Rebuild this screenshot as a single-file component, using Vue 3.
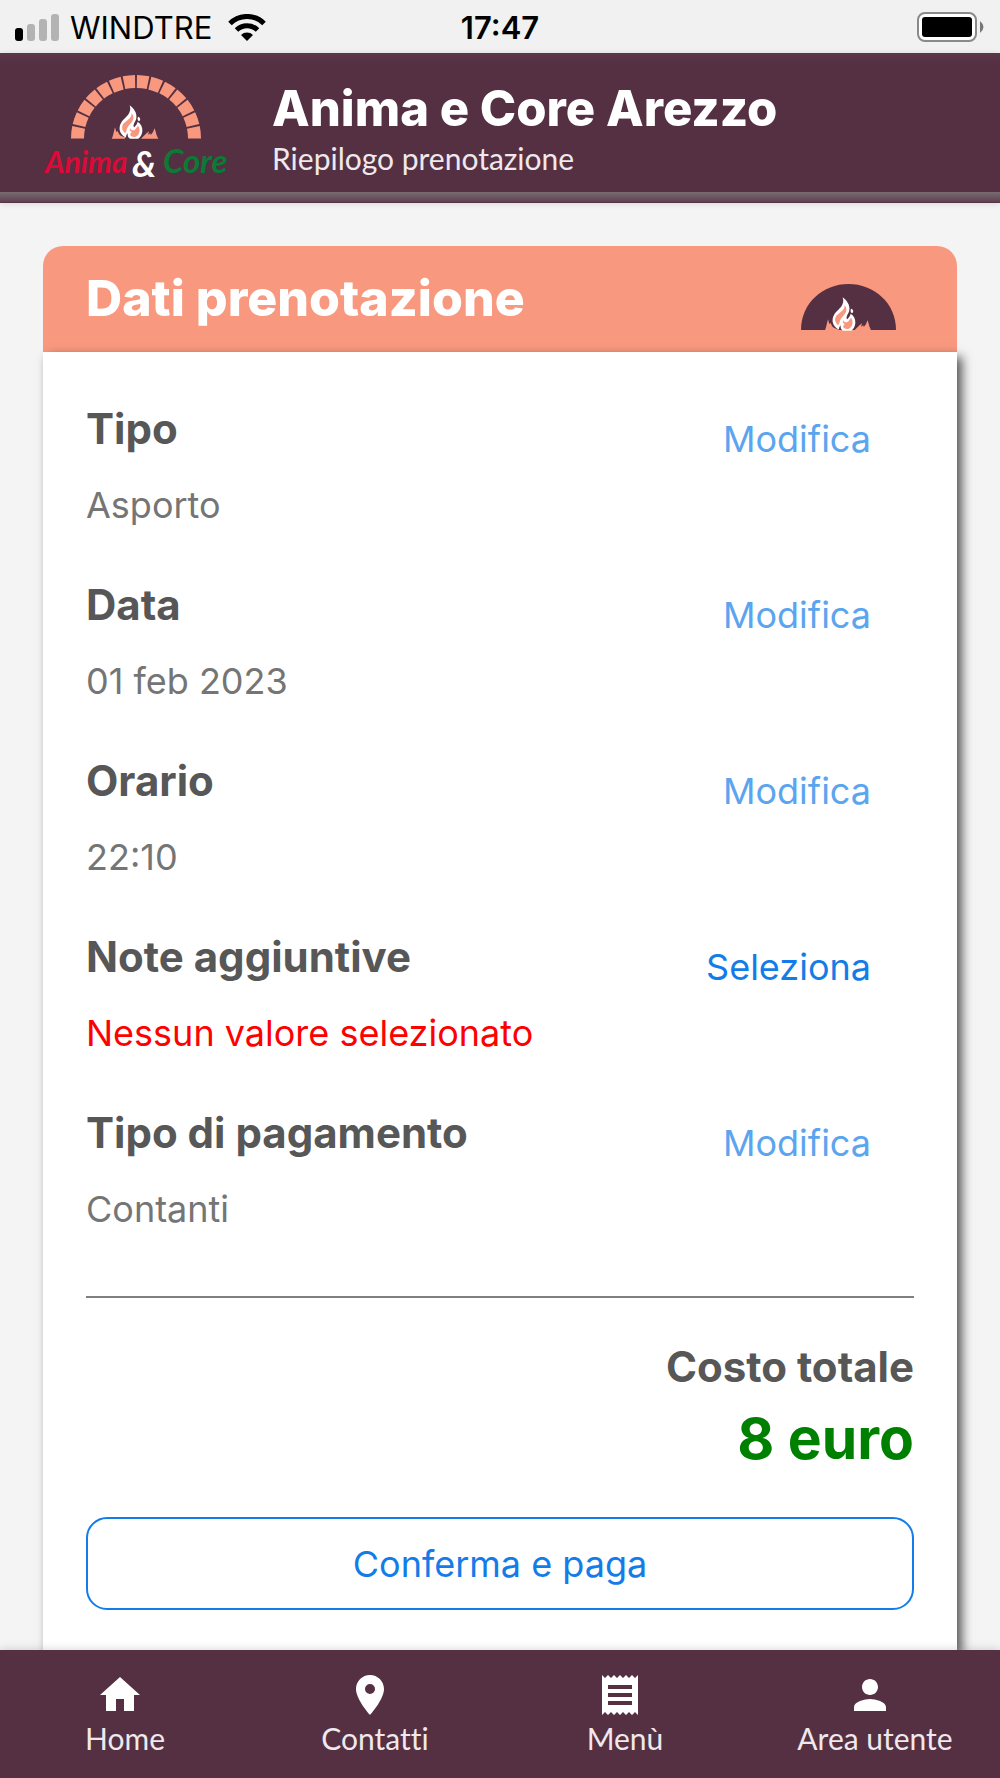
<script setup>
const rows = [
  { label: 'Tipo', value: 'Asporto', action: 'Modifica' },
  { label: 'Data', value: '01 feb 2023', action: 'Modifica' },
  { label: 'Orario', value: '22:10', action: 'Modifica' },
  { label: 'Note aggiuntive', value: 'Nessun valore selezionato', action: 'Seleziona', missing: true },
  { label: 'Tipo di pagamento', value: 'Contanti', action: 'Modifica' },
]

const tabs = [
  { label: 'Home', icon: 'M10 20v-6h4v6h5v-8h3L12 3 2 12h3v8z' },
  { label: 'Contatti', icon: 'M12 2C8.13 2 5 5.13 5 9c0 5.25 7 13 7 13s7-7.75 7-13c0-3.87-3.13-7-7-7zm0 9.5a2.5 2.5 0 0 1 0-5 2.5 2.5 0 0 1 0 5z' },
  { label: 'Menù', icon: 'M18 17H6v-2h12v2zm0-4H6v-2h12v2zm0-4H6V7h12v2zM3 22l1.5-1.5L6 22l1.5-1.5L9 22l1.5-1.5L12 22l1.5-1.5L15 22l1.5-1.5L18 22l1.5-1.5L21 22V2l-1.5 1.5L18 2l-1.5 1.5L15 2l-1.5 1.5L12 2l-1.5 1.5L9 2 7.5 3.5 6 2 4.5 3.5 3 2v20z' },
  { label: 'Area utente', icon: 'M12 12c2.21 0 4-1.79 4-4s-1.79-4-4-4-4 1.79-4 4 1.79 4 4 4zm0 2c-2.67 0-8 1.34-8 4v2h16v-2c0-2.66-5.33-4-8-4z' },
]
</script>

<template>
  <div class="app">
    <svg class="defs" aria-hidden="true">
      <symbol id="flame" viewBox="245 136 144 102">
        <path fill="#f8987f" d="M247 237c4-6 5-15 7-22l3-12 4 14 4-3 4 9c4 5 10 8 18 10v4zM335 237c8-6 14-16 24-22l-3 10 7-4 1 5c6-5 9-11 11-20 5 8 4 14 7 20 2 5 4 9 5 11z" />
        <path fill="#fff" d="M301 137c12 9 23 23 20 39-1 7-6 12-8 19-1 4 0 6 2 8 4-5 9-11 10-17 10 6 15 17 14 29-1 10-5 17-12 22h-25c-6-3-8-9-7-16-4 4-5 8-5 13-13-7-21-18-19-32 2-16 15-25 25-36 6-8 9-17 5-29z" />
        <path fill="#f8987f" d="M307 161c7 8 7 17 1 25-6 9-15 15-16 26-1 2-3 6-4 9-8-6-12-16-8-25 5-11 27-16 27-35zM302 205c3 7 12 10 17 3 3-4 5-7 7-10 7 9 6 22-2 30-6 6-17 5-21-1-2-4 3-7 4-11-4 0-7-4-5-11z" />
        <path fill="#fff" d="M326 171c7 2 9 9 3 14-5-3-5-8-3-14z" />
      </symbol>
    </svg>

    <div class="status">
      <div class="carrier">
        <svg width="45" height="27" viewBox="0 0 45 27" aria-hidden="true">
          <rect x="0" y="14" width="8" height="13" rx="3" />
          <g fill="#b3b3b3">
            <rect x="12" y="10" width="8" height="17" rx="3" />
            <rect x="24" y="5" width="8" height="22" rx="3" />
            <rect x="36" y="0" width="8" height="27" rx="3" />
          </g>
        </svg>
        <span>WINDTRE</span>
        <svg width="38" height="27" viewBox="0 0 38 27" fill="none" stroke="#000" stroke-width="5" aria-hidden="true">
          <path d="M2 9.5a24 24 0 0 1 34 0M8.5 16a15 15 0 0 1 21 0" />
          <path d="M13 21a8.5 8.5 0 0 1 12 0l-6 6z" fill="#000" stroke="none" />
        </svg>
      </div>
      <time>17:47</time>
      <div class="battery">
        <svg width="68" height="32" viewBox="0 0 68 32" aria-hidden="true">
          <rect x="1" y="2" width="58" height="28" rx="7" fill="#fff" stroke="#8a8a8a" stroke-width="2" />
          <rect x="5" y="6" width="50" height="20" rx="3" />
          <path d="M63 10q7 6 0 12z" fill="#777" />
        </svg>
      </div>
    </div>

    <header class="top">
      <svg class="logo" width="190" height="112" viewBox="0 0 190 112" role="img" aria-label="Anima &amp; Core">
        <path d="M35.5 64.5a58.5 57 0 0 1 117 0" fill="none" stroke="#f8987f" stroke-width="13" pathLength="194" stroke-dasharray="12 2" />
        <use href="#flame" x="69" y="31" width="48" height="34" />
        <g class="wordmark">
          <text x="3" y="99" fill="#dc0a37">Anima</text>
          <text class="amp" x="90" y="103" fill="#fff">&amp;</text>
          <text class="core" x="121" y="99" fill="#0b7a35">Core</text>
        </g>
      </svg>
      <div class="heading">
        <h1>Anima e Core Arezzo</h1>
        <p>Riepilogo prenotazione</p>
      </div>
    </header>

    <main>
      <section class="card">
        <div class="card-head">
          <h2>Dati prenotazione</h2>
          <svg width="96" height="48" viewBox="0 0 96 48" aria-hidden="true">
            <path d="M0 47C0 20 22 1 47.5 1S95 20 95 47z" fill="#543042" />
            <use href="#flame" x="23" y="14" width="48" height="34" />
          </svg>
        </div>
        <div class="card-body">
          <div v-for="row in rows" :key="row.label" class="row">
            <div>
              <h3>{{ row.label }}</h3>
              <p :class="{ missing: row.missing }">{{ row.value }}</p>
            </div>
            <button type="button" class="action" :class="{ strong: row.missing }">{{ row.action }}</button>
          </div>
          <hr />
          <div class="total">
            <h3>Costo totale</h3>
            <strong>8 euro</strong>
          </div>
          <button type="button" class="confirm">Conferma e paga</button>
        </div>
      </section>
    </main>

    <nav>
      <a v-for="tab in tabs" :key="tab.label" href="#">
        <svg width="48" height="48" viewBox="0 0 24 24" fill="#fff" aria-hidden="true"><path :d="tab.icon" /></svg>
        <span>{{ tab.label }}</span>
      </a>
    </nav>
  </div>
</template>

<style>
body {
  margin: 0;
  background: #f4f4f4;
}
</style>

<style scoped>
* {
  box-sizing: border-box;
}
.app {
  display: flex;
  flex-direction: column;
  min-height: 100vh;
  font-family: Inter, "Liberation Sans", sans-serif;
  color: #575757;
}
h1, h2, h3, p {
  margin: 0;
}
button {
  font: inherit;
  background: none;
  cursor: pointer;
}
.defs {
  position: absolute;
  width: 0;
  height: 0;
}
.status {
  display: grid;
  grid-template-columns: 1fr auto 1fr;
  align-items: center;
  height: 53px;
  padding: 1px 15px 0;
  background: #f1f1f1;
  color: #000;
  font-size: 31px;
}
.carrier {
  display: flex;
  align-items: center;
  gap: 10px;
}
.carrier span {
  margin-right: 6px;
}
.status time {
  font-weight: 600;
}
.battery {
  display: flex;
  justify-content: flex-end;
}
.top {
  display: flex;
  gap: 40px;
  height: 150px;
  padding: 21px 42px 0;
  background: linear-gradient(#5b3749, #543042 11px, #543042 139px, #796b72 139px, #604653 148px, #543042);
  box-shadow: 0 1px 6px rgba(0, 0, 0, 0.12);
  color: #fff;
}
.wordmark {
  font: italic bold 30px Lato, sans-serif;
}
.wordmark .amp {
  font-size: 36px;
}
.wordmark .core {
  font-size: 33px;
}
.heading {
  padding-top: 5px;
}
h1 {
  font-size: 49px;
  font-weight: 800;
  line-height: 60px;
}
.heading p {
  font: 30px/38px Lato, sans-serif;
  color: #efe8ec;
}
main {
  display: flex;
  flex: 1;
  padding: 43px 43px 0;
}
.card {
  display: flex;
  flex: 1;
  flex-direction: column;
}
.card-head {
  display: flex;
  justify-content: space-between;
  height: 106px;
  padding: 22px 60px 0 43px;
  border-radius: 20px 20px 0 0;
  background: #f8987f;
  color: #fff;
}
.card-head svg {
  margin-top: 15px;
}
h2 {
  font-size: 50px;
  font-weight: 800;
  line-height: 60px;
}
.card-body {
  flex: 1;
  padding: 53px 43px 40px;
  background: #fff;
  box-shadow: 5px 5px 10px rgba(0, 0, 0, 0.65);
}
.row {
  display: flex;
  justify-content: space-between;
  align-items: flex-start;
  height: 176px;
}
h3 {
  font-size: 42px;
  line-height: 48px;
}
.row p {
  margin-top: 30px;
  font-size: 36px;
  line-height: 44px;
  color: #757575;
}
.row p.missing {
  color: #f00;
}
.action {
  margin: 12px 43px 0 0;
  padding: 0;
  border: 0;
  font-size: 36px;
  line-height: 44px;
  color: #5ba5ef;
}
.action.strong {
  color: #147ce8;
}
hr {
  height: 2px;
  margin: 11px 0 45px;
  border: 0;
  background: #808080;
}
.total {
  display: flex;
  flex-direction: column;
  align-items: flex-end;
}
.total strong {
  margin-top: 14px;
  font-size: 57px;
  line-height: 68px;
  color: #008000;
}
.confirm {
  display: block;
  width: 100%;
  height: 93px;
  margin-top: 44px;
  border: 2px solid #147ce8;
  border-radius: 21px;
  font-size: 36px;
  color: #147ce8;
}
nav {
  position: sticky;
  bottom: 0;
  display: grid;
  grid-template-columns: repeat(4, 1fr);
  height: 128px;
  background: #543042;
  box-shadow: 0 -1px 8px rgba(0, 0, 0, 0.15);
}
nav a {
  display: flex;
  flex-direction: column;
  align-items: center;
  padding-top: 21px;
  font: 30px/38px Lato, sans-serif;
  font-variant-ligatures: none;
  color: #efe8ec;
  text-decoration: none;
}
nav svg {
  margin-right: 10px;
}
</style>
